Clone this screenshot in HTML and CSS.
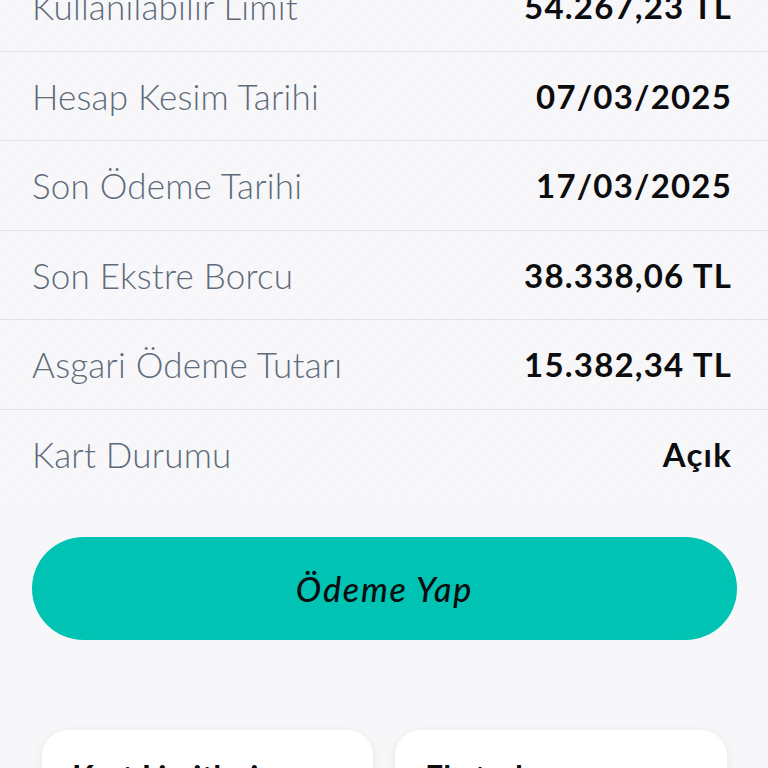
FILE: index.html
```html
<!DOCTYPE html>
<html lang="tr">
<head>
<meta charset="utf-8">
<title>Kart Detayı</title>
<link rel="stylesheet" href="styles.css">
</head>
<body>
<div class="page">
  <div class="details">
    <div class="row"><span class="label">Kullanılabilir Limit</span><span class="value">54.267,23 TL</span></div>
    <div class="row"><span class="label">Hesap Kesim Tarihi</span><span class="value">07/03/2025</span></div>
    <div class="row"><span class="label">Son Ödeme Tarihi</span><span class="value">17/03/2025</span></div>
    <div class="row"><span class="label">Son Ekstre Borcu</span><span class="value">38.338,06 TL</span></div>
    <div class="row"><span class="label">Asgari Ödeme Tutarı</span><span class="value">15.382,34 TL</span></div>
    <div class="row last"><span class="label">Kart Durumu</span><span class="value">Açık</span></div>
  </div>
  <div class="actions">
    <button class="pay">Ödeme Yap</button>
  </div>
  <div class="cards">
    <div class="card"><span class="card-title">Kart Limitleri</span></div>
    <div class="card"><span class="card-title">Ekstreler</span></div>
  </div>
</div>
</body>
</html>
```
FILE: styles.css
```css
html, body {
  margin: 0;
  padding: 0;
  background: #f7f7f9;
  overflow: hidden;
}
.page {
  width: 768px;
  height: 768px;
  overflow: hidden;
  font-family: Lato, "Noto Sans", sans-serif;
}
.details {
  margin-top: -38px;
  background: repeating-linear-gradient(135deg, #f6f6f8 0 6px, #f8f8fa 6px 12px);
}
.row {
  height: 88.5px;
  border-bottom: 1.5px solid #e4e4e7;
  display: flex;
  align-items: center;
  justify-content: space-between;
  padding: 0 36px 0 32px;
}
.row.last {
  border-bottom: none;
  height: 88px;
}
.label {
  font-size: 35px;
  font-weight: 300;
  color: #5f6b7a;
  letter-spacing: 0.2px;
}
.value {
  font-size: 33px;
  font-weight: 700;
  color: #0d0d0f;
  letter-spacing: 1.2px;
}
.actions {
  padding: 39px 31px 0 32px;
}
.pay {
  display: block;
  width: 100%;
  height: 103px;
  border: none;
  border-radius: 52px;
  background: #00c3b3;
  color: #0d0d0f;
  font-family: Lato, "Noto Sans", sans-serif;
  font-size: 34px;
  font-style: italic;
  font-weight: 500;
  letter-spacing: 1.8px;
}
.cards {
  display: grid;
  grid-template-columns: 331px 332px;
  gap: 22px;
  padding: 90px 0 0 42px;
}
.card {
  height: 120px;
  background: #ffffff;
  border-radius: 26px;
  box-shadow: 0 2px 10px rgba(0, 0, 0, 0.07);
  padding: 27px 30px 0 30px;
  box-sizing: border-box;
}
.card-title {
  font-size: 32px;
  font-weight: 700;
  color: #0d0d0f;
}
```
